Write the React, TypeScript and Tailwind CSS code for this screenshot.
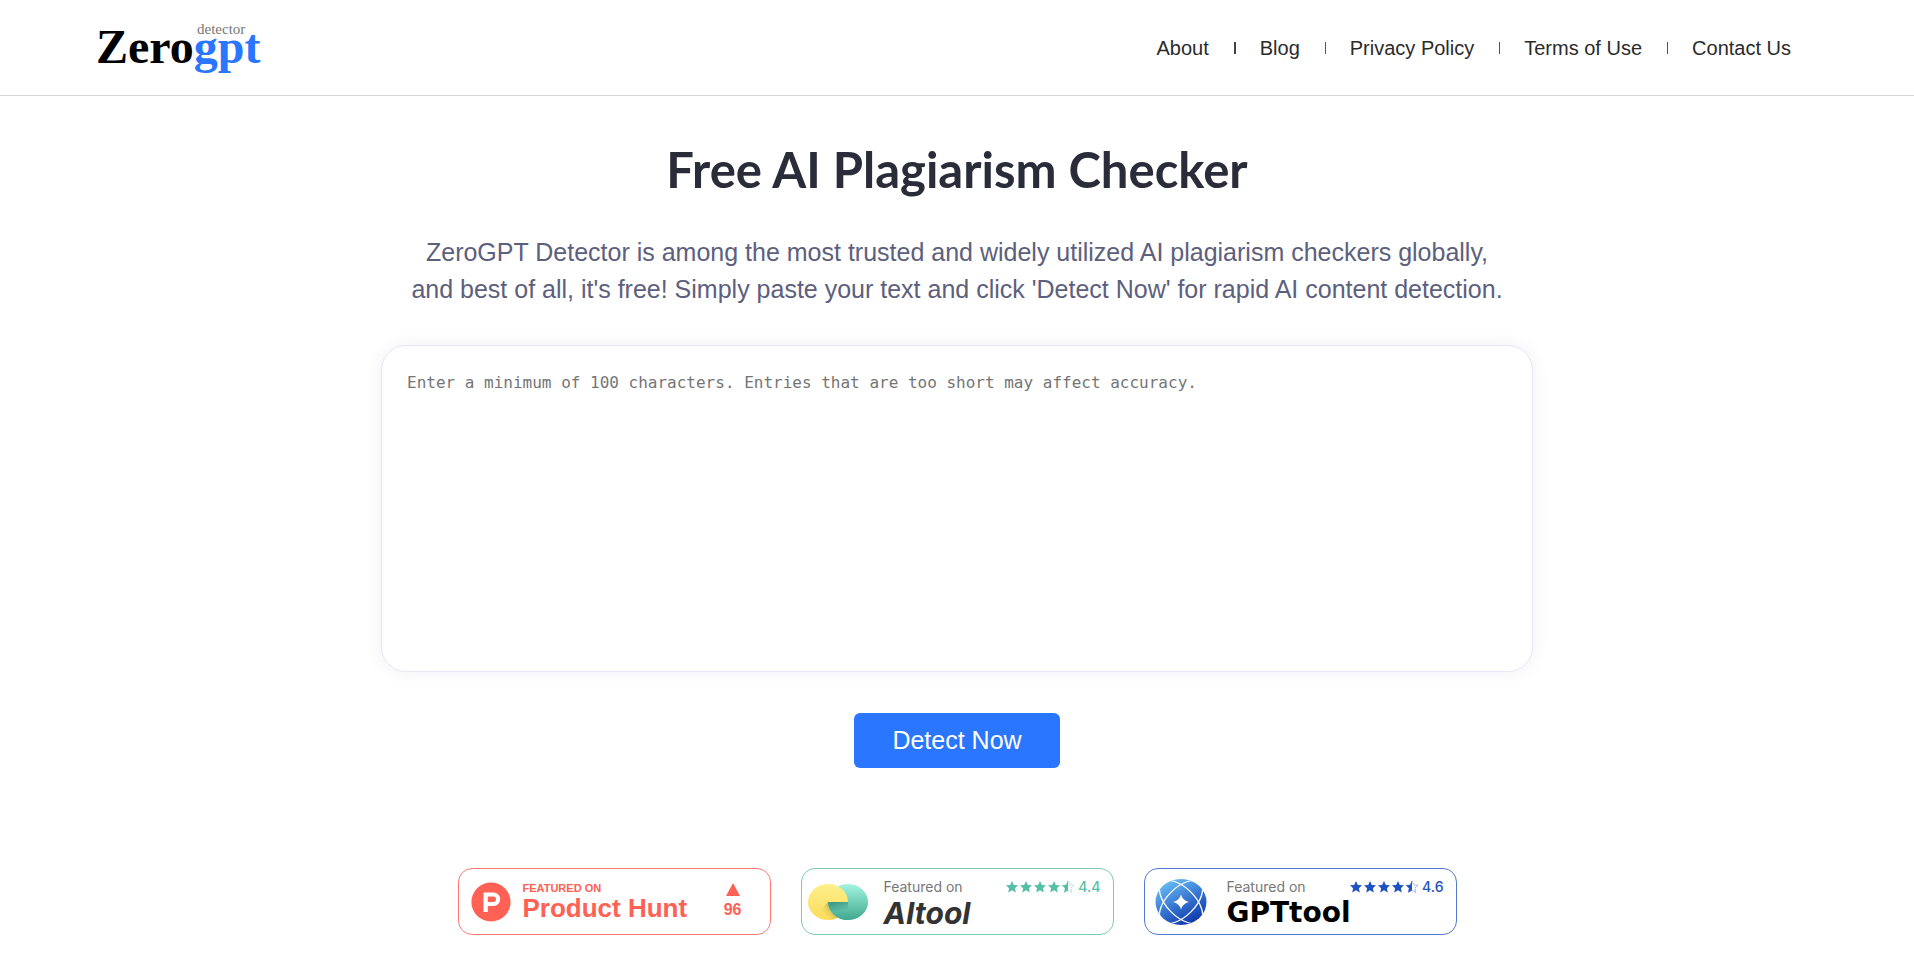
import type { ReactNode } from "react";

const NAV = ["About", "Blog", "Privacy Policy", "Terms of Use", "Contact Us"];

const STAR = "M6 0 7.8 3.9 12 4.300 8.9 7.200 9.8 11.400 6 9.200 2.200 11.400 3.100 7.200 0 4.300 4.200 3.9Z";

function Logo() {
  return (
    <a href="#" className="relative mb-0.5 block font-['Liberation_Serif',serif] text-5xl leading-none">
      <span className="font-bold text-black">Zero</span>
      <span className="font-bold text-[#2a76ff]">gpt</span>
      <span className="absolute -top-0.5 left-[101px] text-[15px] leading-4 text-[#777777]">detector</span>
    </a>
  );
}

function Stars() {
  return (
    <svg viewBox="0 0 68 12" className="h-3 w-[68px]" fill="currentColor" aria-hidden="true">
      {[0, 14, 28, 42].map((x) => (
        <path key={x} d={STAR} transform={`translate(${x} 0)`} />
      ))}
      <g transform="translate(56 0)">
        <path d="M6 0V9.2L2.2 11.4 3.1 7.2 0 4.3 4.2 3.9Z" />
        <path d={STAR} fill="none" stroke="currentColor" strokeWidth="0.6" strokeDasharray="1.4 0.9" />
      </g>
    </svg>
  );
}

function RatedBadge({
  icon,
  name,
  score,
  frame,
  tint,
}: {
  icon: ReactNode;
  name: ReactNode;
  score: string;
  frame: string;
  tint: string;
}) {
  return (
    <a href="#" className={`flex h-[67px] w-[313px] rounded-[14px] border bg-white pr-3 ${frame}`}>
      <div className="flex w-[82px] shrink-0 items-center pl-1.5">{icon}</div>
      <div className="flex flex-1 flex-col pt-2.5">
        <div className="flex h-4 items-center justify-between font-[Inter,sans-serif] text-sm">
          <span className="text-[#777777]">Featured on</span>
          <span className={`flex items-center gap-1 font-medium ${tint}`}>
            <Stars />
            {score}
          </span>
        </div>
        {name}
      </div>
    </a>
  );
}

function ProductHuntBadge() {
  return (
    <a
      href="#"
      className="flex h-[67px] w-[313px] items-center rounded-[14px] border border-[#ff7b72] bg-white pr-7 pl-3 font-bold text-[#ff6154]"
    >
      <svg viewBox="0 0 40 40" className="size-10 shrink-0" aria-hidden="true">
        <circle cx="20" cy="20" r="19.6" fill="#ff6154" />
        <path
          fillRule="evenodd"
          d="M12.5 10.5H22.5a6.7 6.7 0 0 1 0 13.4H16.8V30H12.5ZM16.8 14.5V19.9H22.3a2.7 2.7 0 0 0 0-5.4Z"
          fill="#fff"
        />
      </svg>
      <div className="ml-3 flex flex-1 flex-col">
        <span className="text-[11px] leading-3">FEATURED ON</span>
        <span className="text-[26px] leading-7">Product Hunt</span>
      </div>
      <div className="flex flex-col items-center gap-1">
        <svg viewBox="0 0 14 13" className="h-[13px] w-3.5" aria-hidden="true">
          <path d="M7 0 14 13H0Z" fill="#ff6154" />
        </svg>
        <span className="text-base leading-5">96</span>
      </div>
    </a>
  );
}

function AiToolIcon() {
  return (
    <svg viewBox="0 0 60 36" className="h-9 w-[60px]" aria-hidden="true">
      <defs>
        <linearGradient id="mint" gradientUnits="userSpaceOnUse" x1="40" y1="0" x2="40" y2="36">
          <stop offset="0" stopColor="#a5f5e0" />
          <stop offset="1" stopColor="#3fa88f" />
        </linearGradient>
        <linearGradient id="sun" x1="0" y1="0" x2="0" y2="1">
          <stop offset="0" stopColor="#fff08a" />
          <stop offset="1" stopColor="#fbdc5c" />
        </linearGradient>
        <linearGradient id="shade" gradientUnits="userSpaceOnUse" x1="24" y1="20" x2="14" y2="28">
          <stop offset="0" stopColor="#8c8a40" stopOpacity="0.7" />
          <stop offset="1" stopColor="#d9bf50" stopOpacity="0" />
        </linearGradient>
        <linearGradient id="fold" gradientUnits="userSpaceOnUse" x1="30" y1="18" x2="32" y2="27">
          <stop offset="0" stopColor="#2b8571" stopOpacity="0.7" />
          <stop offset="1" stopColor="#2b8571" stopOpacity="0" />
        </linearGradient>
      </defs>
      <ellipse cx="40" cy="18" rx="20" ry="18" fill="url(#mint)" />
      <ellipse cx="20" cy="18" rx="20" ry="18" fill="url(#sun)" />
      <path d="M20 18 12 27 22 36 30 33.6 24 18Z" fill="url(#shade)" />
      <path d="M20 18A20 18 0 0 0 40 36V18Z" fill="url(#mint)" />
      <path d="M20 18H40V27H23Q20 23 20 18Z" fill="url(#fold)" />
    </svg>
  );
}

function GptToolIcon() {
  return (
    <svg viewBox="0 0 52 46" className="ml-1 h-[46px] w-[52px]" aria-hidden="true">
      <defs>
        <linearGradient id="globe" x1="0.2" y1="0" x2="0.8" y2="1">
          <stop offset="0" stopColor="#6cc4f8" />
          <stop offset="0.5" stopColor="#3876d2" />
          <stop offset="1" stopColor="#0a2fa5" />
        </linearGradient>
        <clipPath id="globe-clip">
          <ellipse cx="26" cy="23" rx="25.5" ry="23" />
        </clipPath>
      </defs>
      <g clipPath="url(#globe-clip)">
        <rect width="52" height="46" fill="url(#globe)" />
        <g fill="none" stroke="#fff" strokeWidth="1.3">
          <ellipse cx="26" cy="23" rx="27" ry="14" transform="rotate(45 26 23)" />
          <ellipse cx="26" cy="23" rx="27" ry="14" transform="rotate(-45 26 23)" />
        </g>
        <path d="M26 15.5Q27.5 21.5 34 23 27.5 24.5 26 30.5 24.5 24.5 18 23 24.5 21.5 26 15.5Z" fill="#fff" />
      </g>
    </svg>
  );
}

export default function App() {
  return (
    <div className="bg-white font-['Liberation_Sans',Arial,sans-serif]">
      <header className="flex h-24 items-center justify-between border-b border-[#d5d5d8] pr-[99px] pl-24">
        <Logo />
        <nav>
          <ul className="flex items-center gap-px text-xl text-[#2b2b2b]">
            {NAV.map((label, i) => (
              <li key={label} className="flex items-center">
                {i > 0 && <span className={i === 1 ? "h-3 w-0.5 bg-[#444444]" : "h-3 w-px bg-[#555555]"} />}
                <a href="#" className="px-6">
                  {label}
                </a>
              </li>
            ))}
          </ul>
        </nav>
      </header>

      <main className="mx-auto flex max-w-[1152px] flex-col items-center pt-10 pb-10">
        <h1 className="text-center font-[Lato,sans-serif] text-[49px] leading-[66px] font-bold text-[#2b2c3a]">
          Free AI Plagiarism Checker
        </h1>
        <p className="mt-8 max-w-[1110px] text-center text-[25px] leading-[37px] text-[#5d607c]">
          ZeroGPT Detector is among the most trusted and widely utilized AI plagiarism checkers globally, and best of
          all, it's free! Simply paste your text and click 'Detect Now' for rapid AI content detection.
        </p>
        <textarea
          aria-label="Text to check"
          placeholder="Enter a minimum of 100 characters. Entries that are too short may affect accuracy."
          className="mt-[37px] h-[327px] w-full resize-none rounded-[25px] border border-[#e6e6f5] bg-white px-[25px] py-[25px] font-['DejaVu_Sans_Mono',monospace] text-base shadow-[0_0_20px_rgba(40,40,80,0.06)] outline-none placeholder:text-[#757575]"
        />
        <button type="button" className="mt-[41px] h-[55px] rounded-md bg-[#2a76ff] px-[38px] text-[25px] text-white">
          Detect Now
        </button>
        <div className="mt-[100px] flex flex-wrap justify-center gap-[30px]">
          <ProductHuntBadge />
          <RatedBadge
            icon={<AiToolIcon />}
            score="4.4"
            frame="border-[#7acbb8]"
            tint="text-[#55bfa6]"
            name={
              <span className="font-[Inter,sans-serif] text-3xl leading-9 font-bold text-[#333333] italic">AItool</span>
            }
          />
          <RatedBadge
            icon={<GptToolIcon />}
            score="4.6"
            frame="border-[#5579cf]"
            tint="text-[#1e52c0]"
            name={
              <span className="font-['DejaVu_Sans',sans-serif] text-[28px] leading-9 font-bold text-black">
                GPTtool
              </span>
            }
          />
        </div>
      </main>
    </div>
  );
}
